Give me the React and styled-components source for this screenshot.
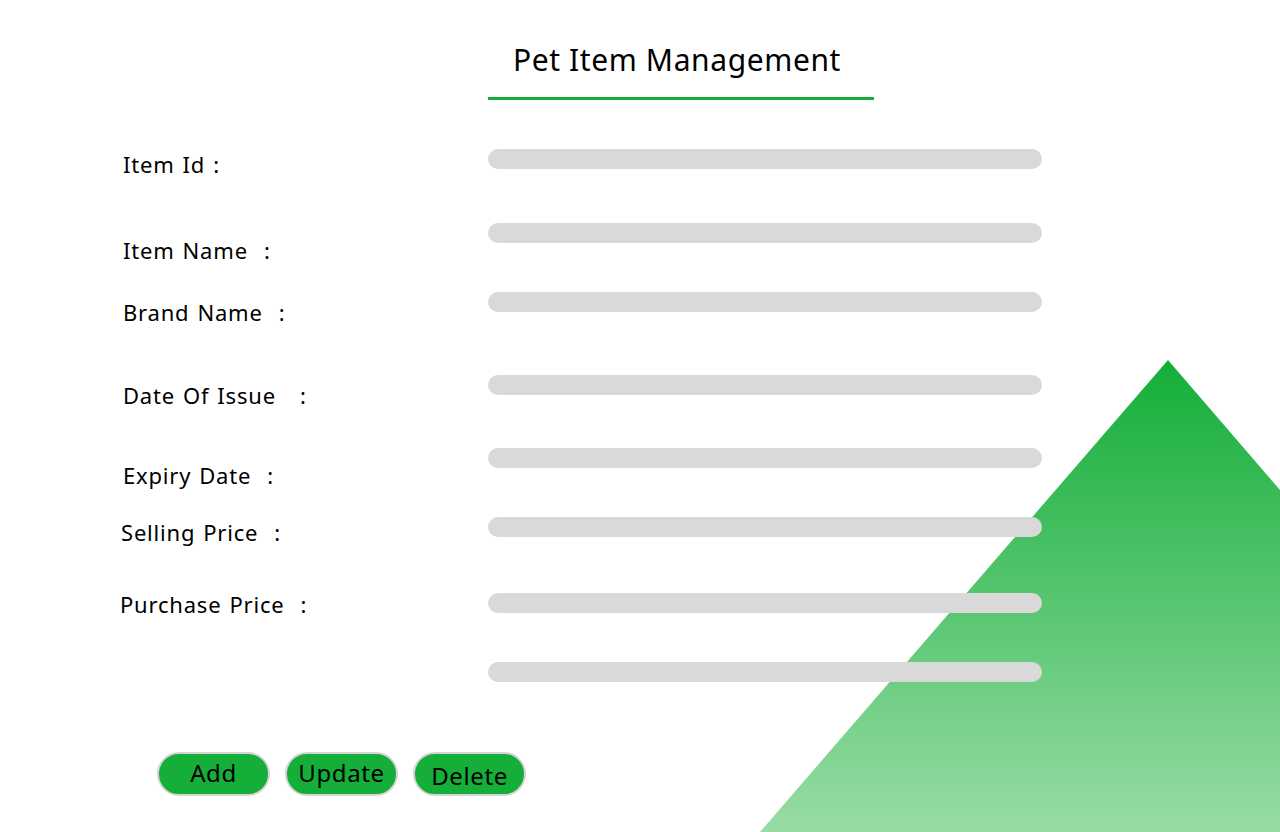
import React from "react";
import styled, { createGlobalStyle } from "styled-components";

const Global = createGlobalStyle`
  html, body { margin: 0; padding: 0; background: #ffffff; }
  body { font-family: "Noto Sans", "DejaVu Sans", sans-serif; overflow: hidden; }
  * { box-sizing: border-box; }
`;

const Page = styled.div`
  position: relative;
  width: 1280px;
  height: 832px;
  overflow: hidden;
  background: #ffffff;
`;

const Backdrop = styled.svg`
  position: absolute;
  left: 760px;
  top: 360px;
  width: 520px;
  height: 472px;
  z-index: 0;
`;

const Content = styled.div`
  position: relative;
  z-index: 1;
  display: flex;
  flex-direction: column;
  padding-top: 36px;
`;

const Header = styled.div`
  display: flex;
  padding-left: 488px;
`;

const Title = styled.h1`
  margin: 0;
  width: 386px;
  padding-right: 8px;
  text-align: center;
  font-weight: 400;
  font-size: 30px;
  letter-spacing: 0.6px;
  line-height: 48px;
  color: #000;
  border-bottom: 3px solid #14ae39;
  padding-bottom: 13px;
`;

const Form = styled.div`
  display: flex;
`;

const LabelColumn = styled.div`
  width: 488px;
  display: flex;
  flex-direction: column;
`;

const Label = styled.label`
  display: block;
  margin-top: ${(p) => p.$gap}px;
  padding-left: ${(p) => p.$indent ?? 123}px;
  font-size: 22px;
  letter-spacing: 0.8px;
  word-spacing: 1.5px;
  line-height: 30px;
  color: #000;
  white-space: pre;
`;

const InputColumn = styled.div`
  display: flex;
  flex-direction: column;
`;

const Field = styled.input`
  display: block;
  width: 554px;
  height: 20px;
  margin-top: ${(p) => p.$gap}px;
  border: none;
  border-radius: 10px;
  background: #d9d9d9;
  outline: none;
  padding: 0 12px;
`;

const Actions = styled.div`
  display: flex;
  gap: 15px;
  padding-left: 157px;
  margin-top: 70px;
`;

const Button = styled.button`
  width: 113px;
  height: 44px;
  border-radius: 22px;
  border: 2px solid #d4d4d4;
  background: #14ae39;
  color: #000;
  font-family: "Noto Sans", "DejaVu Sans", sans-serif;
  font-size: 24px;
  letter-spacing: 0.6px;
  line-height: 1;
  padding: ${(p) => (p.$low ? "4px 0 0" : "0 0 3px")};
  cursor: pointer;
`;

const labels = [
  { text: "Item Id :", gap: 49 },
  { text: "Item Name  :", gap: 56 },
  { text: "Brand Name  :", gap: 32 },
  { text: "Date Of Issue   :", gap: 53 },
  { text: "Expiry Date  :", gap: 50 },
  { text: "Selling Price  :", gap: 27, indent: 121 },
  { text: "Purchase Price  :", gap: 42, indent: 120 },
];

const fieldGaps = [49, 54, 49, 63, 53, 49, 56, 49];

export default function App() {
  return (
    <Page>
      <Global />
      <Backdrop viewBox="0 0 520 472" preserveAspectRatio="none">
        <defs>
          <linearGradient id="tri" x1="0" y1="0" x2="0" y2="1">
            <stop offset="0" stopColor="#14ae39" />
            <stop offset="1" stopColor="#98dca5" />
          </linearGradient>
        </defs>
        <polygon points="0,472 408,0 520,130 520,472" fill="url(#tri)" />
      </Backdrop>
      <Content>
        <Header>
          <Title>Pet Item Management</Title>
        </Header>
        <Form>
          <LabelColumn>
            {labels.map((l) => (
              <Label key={l.text} $gap={l.gap} $indent={l.indent}>
                {l.text}
              </Label>
            ))}
          </LabelColumn>
          <InputColumn>
            {fieldGaps.map((g, i) => (
              <Field key={i} $gap={g} type="text" />
            ))}
          </InputColumn>
        </Form>
        <Actions>
          <Button>Add</Button>
          <Button>Update</Button>
          <Button $low>Delete</Button>
        </Actions>
      </Content>
    </Page>
  );
}
